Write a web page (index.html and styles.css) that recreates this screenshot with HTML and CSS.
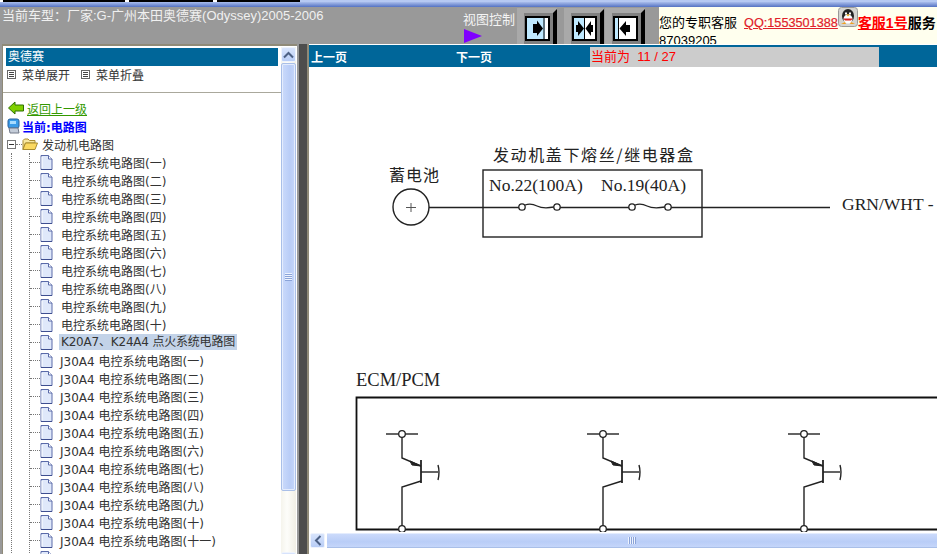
FILE: index.html
```html
<!DOCTYPE html>
<html lang="zh-CN">
<head>
    <meta charset="UTF-8">
    <meta name="viewport" content="width=device-width, initial-scale=1.0">
    <title>电路图</title>
    <link rel="stylesheet" href="styles.css">
</head>
<body>

<!-- shared icons -->
<svg class="icon-defs" width="0" height="0">
    <symbol id="doc" viewBox="0 0 13 16">
        <path d="M1 1.500H8.500L12 5V15.500H1Z" fill="#dfe8fa" stroke="#5a6aa8"/>
        <path d="M8.500 1.500V5H12" fill="#fff" stroke="#5a6aa8"/>
        <path d="M2 3V14.500" fill="none" stroke="#ffffff"/>
        <path d="M1 15.500H12" stroke="#3f4f90"/>
    </symbol>
    <symbol id="menu-box" viewBox="0 0 9 9">
        <rect x=".5" y=".5" width="8" height="8" fill="#fff" stroke="#666"/>
        <path d="M2 2.500H7M2 4.500H7M2 6.500H7" stroke="#444"/>
    </symbol>
</svg>

<div class="top-tabs">
    <span class="tab tab-1"></span>
    <span class="tab tab-2"></span>
    <span class="tab tab-3"></span>
    <span class="tab-rest"></span>
</div>
<div class="top-strip"></div>

<div class="header">
    <div class="car-title">当前车型：厂家:G-广州本田奥德赛(Odyssey)2005-2006</div>
    <div class="view-label">
        <span>视图控制</span>
        <svg class="view-arrow" width="18" height="14" viewBox="0 0 18 14"><path d="M0 0L18 7L0 14Z" fill="#8000ff"/></svg>
    </div>

    <!-- left panel only -->
    <svg class="view-btn" width="40" height="36" viewBox="0 0 40 36">
        <rect width="40" height="36" fill="#a9a9a9"/>
        <rect x="7" y="5" width="29" height="31" fill="#808080"/>
        <path d="M36 5L40 1V36H36Z" fill="#000"/>
        <rect x="9" y="9" width="23" height="23" fill="#bfe9ff" stroke="#000" stroke-width="2"/>
        <path d="M27 9V32" stroke="#000"/>
        <rect x="28" y="10" width="3" height="21" fill="#fff"/>
        <path d="M16 16H20V12.500L26 20.500L20 28V25H16Z" fill="#000"/>
    </svg>
    <!-- both panels -->
    <svg class="view-btn view-btn-mid" width="40" height="36" viewBox="0 0 40 36">
        <rect width="40" height="36" fill="#a9a9a9"/>
        <rect x="7" y="5" width="29" height="31" fill="#808080"/>
        <path d="M36 5L40 1V36H36Z" fill="#000"/>
        <rect x="9" y="9" width="23" height="23" fill="#fff" stroke="#000" stroke-width="2"/>
        <rect x="10" y="10" width="10" height="21" fill="#bfe9ff"/>
        <path d="M20.500 9V32" stroke="#000"/>
        <path d="M12 17H14V13L20 20.500L14 28V24H12Z" fill="#000"/>
        <path d="M29 17H27V13L21.500 20.500L27 28V24H29Z" fill="#000"/>
    </svg>
    <!-- right panel only -->
    <svg class="view-btn view-btn-last" width="40" height="36" viewBox="0 0 40 36">
        <rect width="40" height="36" fill="#a9a9a9"/>
        <rect x="7" y="5" width="29" height="31" fill="#808080"/>
        <path d="M36 5L40 1V36H36Z" fill="#000"/>
        <rect x="9" y="9" width="23" height="23" fill="#fff" stroke="#000" stroke-width="2"/>
        <rect x="10" y="10" width="3" height="21" fill="#bfe9ff"/>
        <path d="M13.500 9V32" stroke="#000"/>
        <path d="M25 17H21V13L14.500 20.500L21 28V24H25Z" fill="#000"/>
    </svg>

    <div class="service">
        <div class="service-line">
            您的专职客服<a class="service-qq">QQ:1553501388</a><svg class="qq-icon" width="20" height="20" viewBox="0 0 20 20">
                <rect x=".5" y=".5" width="19" height="19" rx="3" fill="#d4d4d0" stroke="#9a9a98"/>
                <ellipse cx="10" cy="9" rx="6" ry="7" fill="#222"/>
                <ellipse cx="10" cy="12" rx="4.500" ry="4.500" fill="#fff"/>
                <path d="M7 5.500h2v2H7zM11 5.500h2v2h-2z" fill="#fff"/>
                <path d="M8 7.500H12L10 9.500Z" fill="#f0b020"/>
                <path d="M5 11.500H15L13 13.500H7Z" fill="#d82020"/>
                <path d="M3 17H8L7 15ZM12 17H17L13 15Z" fill="#f0a020"/>
            </svg><a class="service-name">客服1号</a><b>服务</b>
        </div>
        <div class="service-line">87039205</div>
    </div>
</div>

<div class="main">
    <div class="left-panel">
        <div class="left-content">
            <div class="panel-title">奥德赛</div>
            <div class="menu-row">
                <svg width="9" height="9"><use href="#menu-box"/></svg><span class="menu-label">菜单展开</span>
                <svg width="9" height="9"><use href="#menu-box"/></svg><span class="menu-label">菜单折叠</span>
            </div>
            <div class="divider"></div>

            <div class="tree">
                <div class="tree-row back-row">
                    <svg width="16" height="14" viewBox="0 0 16 14"><path d="M.5 7L7 1V4H15.500V10H7V13Z" fill="#7fd000" stroke="#2f7000"/></svg>
                    <a class="back-link">返回上一级</a>
                </div>
                <div class="tree-row current-row">
                    <svg width="13" height="16" viewBox="0 0 13 16">
                        <rect x="1" y="1" width="11" height="9" rx="2" fill="#3a9be8" stroke="#28609c"/>
                        <path d="M3 3H9V6H3Z" fill="#a8dcff"/>
                        <path d="M2 10H11L12 15H3Z" fill="#c4ccd8" stroke="#707888"/>
                    </svg>
                    <b class="current-label">当前:电路图</b>
                </div>
                <div class="tree-row folder-row">
                    <span class="expander"></span>
                    <span class="folder-link"></span>
                    <svg width="16" height="14" viewBox="0 0 16 14">
                        <path d="M1 12.500V3.500L2.500 2H6L7.500 3.500H13V6H3.500Z" fill="#f7e7a0" stroke="#a98c30"/>
                        <path d="M1 12.500L3.500 6H15.500L13 12.500Z" fill="#fbd960" stroke="#a98c30"/>
                    </svg>
                    <span class="folder-label">发动机电路图</span>
                </div>

                <div class="guide-outer">
                    <div class="guide-inner">
                        <div class="leaf"><span class="leaf-line"></span><svg width="13" height="16"><use href="#doc"/></svg><span class="leaf-label">电控系统电路图(一)</span></div>
                        <div class="leaf"><span class="leaf-line"></span><svg width="13" height="16"><use href="#doc"/></svg><span class="leaf-label">电控系统电路图(二)</span></div>
                        <div class="leaf"><span class="leaf-line"></span><svg width="13" height="16"><use href="#doc"/></svg><span class="leaf-label">电控系统电路图(三)</span></div>
                        <div class="leaf"><span class="leaf-line"></span><svg width="13" height="16"><use href="#doc"/></svg><span class="leaf-label">电控系统电路图(四)</span></div>
                        <div class="leaf"><span class="leaf-line"></span><svg width="13" height="16"><use href="#doc"/></svg><span class="leaf-label">电控系统电路图(五)</span></div>
                        <div class="leaf"><span class="leaf-line"></span><svg width="13" height="16"><use href="#doc"/></svg><span class="leaf-label">电控系统电路图(六)</span></div>
                        <div class="leaf"><span class="leaf-line"></span><svg width="13" height="16"><use href="#doc"/></svg><span class="leaf-label">电控系统电路图(七)</span></div>
                        <div class="leaf"><span class="leaf-line"></span><svg width="13" height="16"><use href="#doc"/></svg><span class="leaf-label">电控系统电路图(八)</span></div>
                        <div class="leaf"><span class="leaf-line"></span><svg width="13" height="16"><use href="#doc"/></svg><span class="leaf-label">电控系统电路图(九)</span></div>
                        <div class="leaf"><span class="leaf-line"></span><svg width="13" height="16"><use href="#doc"/></svg><span class="leaf-label">电控系统电路图(十)</span></div>
                        <div class="leaf"><span class="leaf-line"></span><svg width="13" height="16"><use href="#doc"/></svg><span class="leaf-label leaf-selected">K20A7、K24A4 点火系统电路图</span></div>
                        <div class="leaf"><span class="leaf-line"></span><svg width="13" height="16"><use href="#doc"/></svg><span class="leaf-label leaf-j30">J30A4 电控系统电路图(一)</span></div>
                        <div class="leaf"><span class="leaf-line"></span><svg width="13" height="16"><use href="#doc"/></svg><span class="leaf-label leaf-j30">J30A4 电控系统电路图(二)</span></div>
                        <div class="leaf"><span class="leaf-line"></span><svg width="13" height="16"><use href="#doc"/></svg><span class="leaf-label leaf-j30">J30A4 电控系统电路图(三)</span></div>
                        <div class="leaf"><span class="leaf-line"></span><svg width="13" height="16"><use href="#doc"/></svg><span class="leaf-label leaf-j30">J30A4 电控系统电路图(四)</span></div>
                        <div class="leaf"><span class="leaf-line"></span><svg width="13" height="16"><use href="#doc"/></svg><span class="leaf-label leaf-j30">J30A4 电控系统电路图(五)</span></div>
                        <div class="leaf"><span class="leaf-line"></span><svg width="13" height="16"><use href="#doc"/></svg><span class="leaf-label leaf-j30">J30A4 电控系统电路图(六)</span></div>
                        <div class="leaf"><span class="leaf-line"></span><svg width="13" height="16"><use href="#doc"/></svg><span class="leaf-label leaf-j30">J30A4 电控系统电路图(七)</span></div>
                        <div class="leaf"><span class="leaf-line"></span><svg width="13" height="16"><use href="#doc"/></svg><span class="leaf-label leaf-j30">J30A4 电控系统电路图(八)</span></div>
                        <div class="leaf"><span class="leaf-line"></span><svg width="13" height="16"><use href="#doc"/></svg><span class="leaf-label leaf-j30">J30A4 电控系统电路图(九)</span></div>
                        <div class="leaf"><span class="leaf-line"></span><svg width="13" height="16"><use href="#doc"/></svg><span class="leaf-label leaf-j30">J30A4 电控系统电路图(十)</span></div>
                        <div class="leaf"><span class="leaf-line"></span><svg width="13" height="16"><use href="#doc"/></svg><span class="leaf-label leaf-j30">J30A4 电控系统电路图(十一)</span></div>
                        <div class="leaf"><span class="leaf-line"></span><svg width="13" height="16"><use href="#doc"/></svg></div>
                    </div>
                </div>
            </div>
        </div>

        <!-- vertical scrollbar -->
        <div class="v-scroll">
            <div class="scroll-btn v-btn">
                <svg width="11" height="8" viewBox="0 0 11 8"><path d="M1 6.500L5.500 2L10 6.500" fill="none" stroke="#4d6185" stroke-width="2"/></svg>
            </div>
            <div class="v-thumb"><span class="v-grip"></span></div>
            <div class="scroll-btn v-btn"></div>
        </div>
    </div>

    <div class="splitter"></div>

    <div class="right-panel">
        <div class="page-bar">
            <span class="page-prev">上一页</span>
            <span class="page-next">下一页</span>
            <span class="page-now">当前为&nbsp; 11 / 27</span>
        </div>

        <div class="diagram">
            <svg width="628" height="465" viewBox="309 67 628 465">
                <defs>
                    <g id="transistor" fill="none" stroke="#222">
                        <path d="M386 434H418" stroke-width="1.400"/>
                        <path d="M402 437V458L421 466" stroke-width="1.400"/>
                        <path d="M410 461L421 466L412 465Z" fill="#222"/>
                        <path d="M421 460V483" stroke-width="1.800"/>
                        <path d="M421 472H438" stroke-width="1.400"/>
                        <path d="M438 465Q440 472 438 480" stroke-width="1.400"/>
                        <path d="M421 481L402 487V526" stroke-width="1.400"/>
                        <circle cx="402" cy="434" r="3.300" fill="#fff" stroke-width="1.300"/>
                        <circle cx="402" cy="529" r="3.300" fill="#fff" stroke-width="1.300"/>
                    </g>
                </defs>

                <text class="dg-cjk" x="389" y="181" textLength="50">蓄电池</text>
                <text class="dg-cjk" x="493" y="161" textLength="200">发动机盖下熔丝/继电器盒</text>

                <path d="M429 207.500H830" stroke="#222" stroke-width="1.300"/>
                <circle cx="411" cy="207" r="18" fill="#fff" stroke="#222" stroke-width="1.400"/>
                <path d="M406 207.500H416M411 203V212" stroke="#555"/>

                <rect x="483" y="170" width="219" height="67" fill="none" stroke="#222" stroke-width="1.400"/>
                <text class="dg-latin" x="489" y="191">No.22(100A)</text>
                <text class="dg-latin" x="601" y="191">No.19(40A)</text>

                <g fill="#fff" stroke="#222" stroke-width="1.300">
                    <path d="M524 207.500H555" stroke="#fff" stroke-width="3"/>
                    <path d="M634 207.500H666" stroke="#fff" stroke-width="3"/>
                    <path d="M525 205Q531 203 537 206T554 207" fill="none"/>
                    <path d="M635 205Q641 203 647 206T665 207" fill="none"/>
                    <circle cx="522" cy="207" r="3.200"/>
                    <circle cx="557" cy="207" r="3.200"/>
                    <circle cx="632" cy="207" r="3.200"/>
                    <circle cx="668" cy="207" r="3.200"/>
                </g>

                <text class="dg-latin" x="842" y="210">GRN/WHT -</text>
                <text class="dg-latin dg-big" x="356" y="386">ECM/PCM</text>

                <path d="M937 397.500H356.500V529.500H937" fill="none" stroke="#111" stroke-width="1.800"/>
                <use href="#transistor"/>
                <use href="#transistor" x="201"/>
                <use href="#transistor" x="402"/>
            </svg>
        </div>

        <!-- horizontal scrollbar -->
        <div class="h-scroll">
            <div class="scroll-btn h-btn">
                <svg width="8" height="11" viewBox="0 0 8 11"><path d="M6.500 1L2 5.500L6.500 10" fill="none" stroke="#4d6185" stroke-width="2"/></svg>
            </div>
            <div class="h-thumb"><span class="h-grip"></span></div>
        </div>
    </div>
</div>

</body>
</html>
```

FILE: styles.css
```css
html, body {
    margin: 0;
    height: 554px;
    overflow: hidden;
}

body {
    font-family: "DejaVu Sans", "Noto Sans CJK SC", sans-serif;
    font-size: 12px;
    color: #333;
    background-color: #fff;
}

.icon-defs {
    display: block;
    height: 0;
}

/* top strip */
.top-tabs {
    display: flex;
    height: 2px;
    background-color: #fff;
}

.tab {
    background-color: #000;
    margin-right: 4px;
}

.tab-1 {
    width: 122px;
    margin-left: 3px;
}

.tab-2 {
    width: 84px;
}

.tab-3 {
    width: 83px;
    margin-right: 0;
}

.tab-rest {
    flex: 1;
    background-color: #b6c9f2;
}

.top-strip {
    height: 5px;
    background: linear-gradient(#a9bdec, #5472c2);
}

/* header */
.header {
    display: flex;
    height: 37px;
    background-color: #999;
    overflow: hidden;
}

.car-title {
    width: 461px;
    padding: 1px 0 0 2px;
    font-family: "Liberation Sans", "Noto Sans CJK SC", sans-serif;
    font-size: 13px;
    line-height: 16px;
    color: #f0f0f0;
}

.view-label {
    width: 54px;
    padding-top: 4px;
    font-family: "Liberation Sans", "Noto Sans CJK SC", sans-serif;
    font-size: 13px;
    line-height: 17px;
    color: #f4f4f4;
}

.view-label span {
    display: block;
}

.view-arrow {
    display: block;
    margin: 1px 0 0 1px;
}

.view-btn {
    margin-top: 1px;
}

.view-btn-mid {
    margin-left: 7px;
}

.view-btn-last {
    margin-left: 1px;
}

.service {
    width: 278px;
    margin-left: auto;
    background-color: #ffffee;
    color: #000;
    font-family: "Liberation Sans", "Noto Sans CJK SC", sans-serif;
    font-size: 13px;
    line-height: 18px;
    overflow: hidden;
}

.service-line {
    white-space: nowrap;
    height: 18px;
}

.service-line:first-child {
    height: 25px;
    display: flex;
    align-items: flex-end;
}

.service-qq {
    margin-left: 7px;
    color: #e0202a;
    font-size: 12.7px;
    text-decoration: underline;
    -webkit-text-stroke: 0.2px #e0202a;
}

.qq-icon {
    flex: none;
    align-self: flex-start;
}

.service-name {
    color: #f00;
    font-weight: bold;
    font-size: 14px;
    text-decoration: underline;
}

.service b {
    font-size: 14px;
}

/* main area */
.main {
    display: flex;
    height: 510px;
    background-color: #999;
}

.left-panel {
    display: flex;
    width: 293px;
    height: 508px;
    margin-left: 2px;
    padding-right: 1px;
    background-color: #fff;
    border-top: 2px solid #8f8a78;
    border-left: 1px solid #8f8a78;
}

.left-content {
    flex: 1;
    min-width: 0;
    overflow: hidden;
}

.panel-title {
    height: 18px;
    margin: 2px 3px 0 3px;
    padding-left: 2px;
    line-height: 18px;
    background-color: #006699;
    color: #fff;
}

.menu-row {
    display: flex;
    align-items: center;
    height: 17px;
    padding-left: 4px;
}

.menu-label {
    width: 59px;
    margin-left: 6px;
    white-space: nowrap;
}

.divider {
    margin-top: 9px;
    border-top: 1px solid #aaa89c;
}

.tree {
    margin-top: 6px;
}

.tree-row {
    display: flex;
    align-items: center;
    height: 18px;
    white-space: nowrap;
}

.back-row {
    padding-left: 5px;
}

.back-link {
    margin-left: 3px;
    color: #339900;
    text-decoration: underline;
}

.current-row {
    padding-left: 4px;
}

.current-label {
    margin-left: 2px;
    color: #0000ff;
}

.folder-row {
    padding-left: 4px;
}

.expander {
    flex: none;
    width: 7px;
    height: 7px;
    border: 1px solid #777;
    background: linear-gradient(#333, #333) center / 5px 1px no-repeat #fff;
}

.folder-link {
    flex: none;
    width: 6px;
    border-top: 1px dotted #777;
}

.folder-label {
    margin-left: 4px;
}

.guide-outer {
    margin-left: 8px;
    border-left: 1px dotted #777;
}

.guide-inner {
    margin-left: 17px;
    border-left: 1px dotted #777;
}

.leaf {
    display: flex;
    align-items: center;
    height: 18px;
    white-space: nowrap;
}

.leaf-line {
    flex: none;
    width: 10px;
    border-top: 1px dotted #777;
}

.leaf svg {
    flex: none;
}

.leaf-label {
    margin-left: 8px;
    color: #333;
}

.leaf-j30 {
    margin-left: 7px;
}

.leaf-selected {
    margin-left: 6px;
    padding: 0 2px;
    line-height: 16px;
    letter-spacing: -0.2px;
    background-color: #c3d3e8;
}

/* scrollbars */
.scroll-btn {
    display: flex;
    align-items: center;
    justify-content: center;
    background: linear-gradient(#d8e4fc, #b8cdf6);
    border: 1px solid #eef3fd;
    border-radius: 2px;
    box-sizing: border-box;
}

.v-scroll {
    flex: none;
    width: 15px;
    margin-top: 1px;
    display: flex;
    flex-direction: column;
    overflow: hidden;
    background: linear-gradient(90deg, #f5f4ec, #fdfdfa 40%, #f1efe5);
}

.v-btn {
    flex: none;
    height: 15px;
}

.v-thumb {
    flex: none;
    height: 428px;
    display: flex;
    align-items: center;
    justify-content: center;
    box-sizing: border-box;
    margin: 1px 0 61px;
    background: linear-gradient(90deg, #cbdafb, #b9cdf7 60%, #c5d6fa);
    border: 1px solid #a9bfe8;
    border-radius: 2px;
    box-shadow: inset 0 0 0 1px #e4ecfd;
}

.v-grip {
    width: 7px;
    height: 8px;
    background: repeating-linear-gradient(#eef3fe 0 1px, #8aa3d8 1px 2px);
}

.splitter {
    flex: none;
    width: 8px;
    margin-left: 2px;
    background-color: #4d4d4d;
}

.right-panel {
    flex: 1;
    min-width: 0;
    display: flex;
    flex-direction: column;
    border-left: 2px solid #8f8a78;
    background-color: #fff;
}

.page-bar {
    display: flex;
    align-items: center;
    height: 22px;
    margin-top: 1px;
    background-color: #006699;
    flex: none;
}

.page-prev,
.page-next {
    font-weight: bold;
    color: #fff;
}

.page-prev {
    width: 145px;
    margin-left: 2px;
}

.page-next {
    width: 134px;
}

.page-now {
    align-self: flex-end;
    width: 288px;
    height: 20px;
    padding-left: 1px;
    line-height: 20px;
    background-color: #ccc;
    color: #f00;
    font-family: "Liberation Sans", "Noto Sans CJK SC", sans-serif;
    font-size: 13px;
}

.diagram {
    flex: none;
    height: 465px;
    overflow: hidden;
}

.diagram svg {
    display: block;
}

.dg-cjk {
    font-family: "Noto Sans CJK SC", sans-serif;
    font-size: 16px;
    fill: #222;
}

.dg-latin {
    font-family: "Liberation Serif", serif;
    font-size: 17.5px;
    fill: #222;
}

.dg-big {
    font-size: 18.5px;
}

.h-scroll {
    display: flex;
    height: 15px;
    margin-top: 1px;
    padding-left: 1px;
    flex: none;
}

.h-btn {
    width: 15px;
    flex: none;
}

.h-thumb {
    flex: 1;
    display: flex;
    align-items: center;
    justify-content: center;
    margin-left: 2px;
    background: linear-gradient(#cbdafb, #b9cdf7 60%, #c5d6fa);
    border-top: 1px solid #e4ecfd;
    border-bottom: 1px solid #a9bfe8;
}

.h-grip {
    width: 8px;
    height: 7px;
    background: repeating-linear-gradient(90deg, #eef3fe 0 1px, #8aa3d8 1px 2px);
}
```
